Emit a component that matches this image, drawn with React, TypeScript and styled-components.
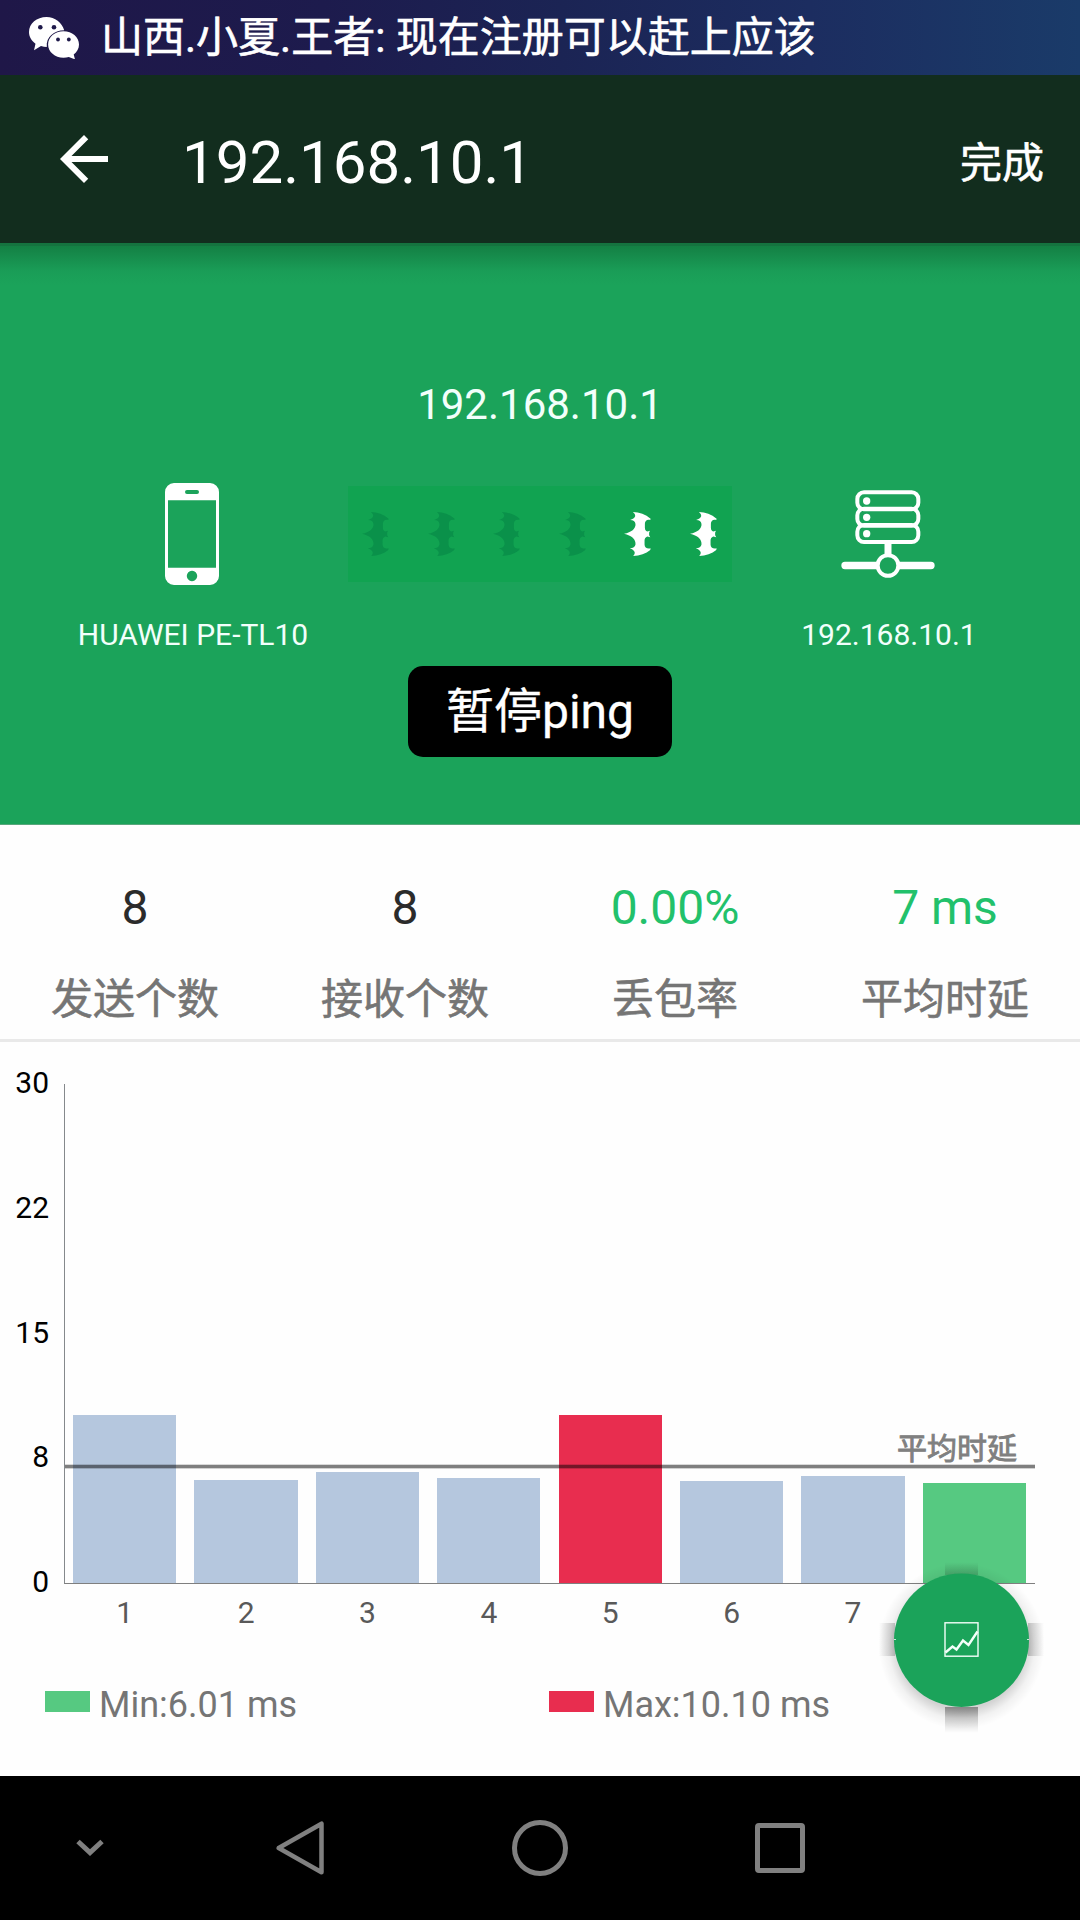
import React from "react";
import styled, { createGlobalStyle } from "styled-components";

const GlobalStyle = createGlobalStyle`
  *, *::before, *::after { box-sizing: border-box; }
  body { margin: 0; background: #fff; }
`;

const Screen = styled.div`
  position: relative;
  width: 1080px;
  height: 1920px;
  display: flex;
  flex-direction: column;
  overflow: hidden;
  background: #fefefe;
  font-family: Roboto, "Noto Sans CJK SC", sans-serif;
`;

const StatusBar = styled.div`
  height: 75px;
  flex: none;
  display: flex;
  align-items: center;
  padding-left: 29px;
  gap: 22px;
  color: #fff;
  background: linear-gradient(90deg, #1f1748 0%, #1d1b4d 30%, #1b2454 52%, #1c2d60 75%, #1a3b69 100%);
`;

const Ticker = styled.span`
  margin-top: -1px;
  font-size: 42px;
  line-height: 75px;
  white-space: pre;
  -webkit-text-stroke: 0.6px #fff;
`;

const AppBar = styled.header`
  height: 168px;
  flex: none;
  display: flex;
  align-items: center;
  padding: 0 36px 0 48px;
  background: #122d1e;
  color: #fff;
`;

const Title = styled.h1`
  margin: 0;
  padding: 7px 0 0 62px;
  flex: 1;
  font-size: 60px;
  line-height: 72px;
  font-weight: 400;
`;

const DoneButton = styled.button`
  border: 0;
  background: none;
  padding: 9px 0 0;
  color: #fff;
  font: 400 42px/50px Roboto, "Noto Sans CJK SC", sans-serif;
  -webkit-text-stroke: 0.6px #fff;
`;

const Hero = styled.section`
  height: 582px;
  flex: none;
  display: flex;
  flex-direction: column;
  align-items: center;
  padding-top: 137px;
  color: #fff;
  border-bottom: 1px solid #57a77c;
  background: linear-gradient(
      180deg,
      #15733f 0,
      #15733f 3px,
      #148044 3px,
      #178f4e 16px,
      #1a9d57 28px,
      rgba(27, 163, 90, 0) 42px
    ),
    #1ba35a;
`;

const HostName = styled.div`
  font-size: 42px;
  line-height: 50px;
  color: #f2fffb;
`;

const Route = styled.div`
  width: 1008px;
  height: 183px;
  margin-top: 53px;
  display: grid;
  grid-template-columns: 312px 384px 312px;
`;

const Endpoint = styled.div`
  display: flex;
  flex-direction: column;
  align-items: center;
`;

const IconSlot = styled.div`
  height: 102px;
  display: flex;
  align-items: center;
`;

const EndpointLabel = styled.span`
  margin-top: 32px;
  padding-left: 2px;
  font-size: 30px;
  line-height: 36px;
  color: #f2fffb;
`;

const Track = styled.div`
  height: 96px;
  margin-top: 3px;
  padding: 0 15px 0 14px;
  display: flex;
  align-items: center;
  justify-content: space-between;
  background: #11a351;
`;

const PauseButton = styled.button`
  width: 264px;
  height: 91px;
  padding: 1px 0 0;
  border: 0;
  border-radius: 15px;
  background: #000;
  color: #fff;
  font: 400 48px/90px Roboto, "Noto Sans CJK SC", sans-serif;
  -webkit-text-stroke: 0.3px #fff;
`;

const Stats = styled.section`
  height: 217px;
  flex: none;
  display: grid;
  grid-template-columns: repeat(4, 1fr);
  padding-top: 55px;
  border-bottom: 3px solid #e9e9e9;
`;

const Stat = styled.div`
  display: flex;
  flex-direction: column;
  align-items: center;
  gap: 40px;
`;

const StatValue = styled.span<{ $good?: boolean }>`
  font-size: 48px;
  line-height: 56px;
  color: ${(p) => (p.$good ? "#22c16b" : "#2b2b2b")};
`;

const StatLabel = styled.span`
  margin-top: -1px;
  font-size: 42px;
  line-height: 50px;
  color: #757575;
  -webkit-text-stroke: 0.6px #757575;
`;

const ChartPanel = styled.section`
  height: 734px;
  flex: none;
  display: grid;
  grid-template-columns: 49px 971px;
  grid-template-rows: 542px 54px auto;
  column-gap: 15px;
  padding-top: 26px;
`;

const YAxis = styled.div`
  height: 529px;
  display: flex;
  flex-direction: column;
  justify-content: space-between;
  text-align: right;
  font-size: 30px;
  line-height: 30px;
  color: #000;
`;

const Plot = styled.div`
  position: relative;
  height: 500px;
  margin-top: 16px;
  padding: 0 9px 0 8px;
  display: grid;
  grid-template-columns: repeat(8, 1fr);
  column-gap: 18.2px;
  align-items: end;
  border-left: 1px solid #85898c;
  border-bottom: 1px solid #7f7f7f;
`;

const Bar = styled.div<{ $color: string; $height: number }>`
  height: ${(p) => p.$height}px;
  background: ${(p) => p.$color};
`;

const AverageLine = styled.div`
  position: absolute;
  left: 0;
  right: 0;
  top: 380px;
  height: 5px;
  background: linear-gradient(
    180deg,
    rgba(0, 0, 0, 0.15) 0 1px,
    rgba(0, 0, 0, 0.5) 1px 4px,
    rgba(0, 0, 0, 0.18) 4px 5px
  );
`;

const AverageLabel = styled.span`
  position: absolute;
  right: 18px;
  top: 347px;
  font-size: 30px;
  line-height: 36px;
  color: #808080;
  -webkit-text-stroke: 0.9px #808080;
`;

const XAxis = styled.div`
  grid-column: 2;
  display: grid;
  grid-template-columns: repeat(8, 1fr);
  margin-top: -15px;
  text-align: center;
  font-size: 30px;
  line-height: 36px;
  color: #595959;
`;

const Legend = styled.div`
  grid-column: 1 / -1;
  display: grid;
  grid-template-columns: 504px auto;
  align-items: start;
  padding: 19px 0 0 45px;
`;

const LegendItem = styled.div`
  display: flex;
  align-items: flex-start;
  gap: 9px;
  padding-top: 1px;
  font-size: 36px;
  line-height: 42px;
  color: #757575;
`;

const Swatch = styled.i<{ $color: string }>`
  width: 45px;
  height: 21px;
  margin-top: 7px;
  background: ${(p) => p.$color};
`;

const Fab = styled.button`
  position: absolute;
  left: 879px;
  top: 1560px;
  width: 166px;
  height: 174px;
  padding: 0;
  border: 0;
  background: none;
`;

const NavBar = styled.nav`
  height: 144px;
  flex: none;
  display: grid;
  grid-template-columns: 180px 240px 240px 240px 180px;
  align-items: center;
  justify-items: center;
  background: #000;
`;

const WechatLogo = () => (
  <svg width="50" height="42" viewBox="0 0 50 42" fill="#fff">
    <path d="M17.500 0C7.800 0 0 6.600 0 15c0 4.700 2.500 8.900 6.500 11.700L5 33.200l7-4.200c1.900.6 3.800.9 5.800.9C17 20 25 13.400 35.200 13.300 33 5.500 26 0 17.500 0z" />
    <path d="M34.500 14.300c-8.600 0-15.400 5.900-15.400 13.200s6.800 13.200 15.400 13.200c1.900 0 3.700-.3 5.300-.8l6.200 2.500-1.300-4.900c3.300-2.400 5.300-6 5.300-10 0-7.300-6.900-13.200-15.500-13.200z" />
    <g fill="#1e194a">
      <circle cx="11.300" cy="10.300" r="2.300" />
      <circle cx="25" cy="10.300" r="2.300" />
      <circle cx="29" cy="22.500" r="1.900" />
      <circle cx="39.800" cy="22.500" r="1.900" />
    </g>
  </svg>
);

const BackArrow = () => (
  <svg width="72" height="72" viewBox="0 0 24 24" fill="#fff">
    <path d="M20 11H7.830l5.590-5.590L12 4l-8 8 8 8 1.410-1.410L7.830 13H20v-2z" />
  </svg>
);

const PhoneIcon = () => (
  <svg width="54" height="102" viewBox="0 0 54 102">
    <path
      fill="#fff"
      fillRule="evenodd"
      d="M9 0h36a9 9 0 0 1 9 9v84a9 9 0 0 1-9 9H9a9 9 0 0 1-9-9V9a9 9 0 0 1 9-9zM3 17.300v67.400h48V17.300zM22 7a2 2 0 0 0 0 4h10a2 2 0 0 0 0-4zM27 87.800a5.200 5.200 0 1 0 .01 0z"
    />
  </svg>
);

const ServerIcon = () => (
  <svg width="94" height="88" viewBox="0 0 282 264" fill="none" stroke="#fff" strokeWidth="12">
    <rect x="49" y="7" width="183" height="51" rx="20" />
    <rect x="49" y="56" width="183" height="51" rx="20" />
    <rect x="49" y="105" width="183" height="51" rx="20" />
    <g fill="#fff" stroke="none">
      <circle cx="77" cy="33" r="11" />
      <circle cx="77" cy="82" r="11" />
      <circle cx="77" cy="131" r="11" />
    </g>
    <path d="M141 160v34" strokeWidth="21" />
    <path d="M12 226.500H108M174 226.500H270" strokeWidth="22" strokeLinecap="round" />
    <circle cx="141" cy="226.500" r="31" fill="#1ba35a" />
  </svg>
);

const Bat = ({ active }: { active: boolean }) => (
  <svg width="27" height="44" viewBox="0 0 80 131" fill={active ? "#fff" : "#0a914a"}>
    <path d="M26 0C46 1 64 7 79 20L78 24C68 21 62 27 62 35V47C62 53 65 57 69 58L77 56L74 63Q77 65 74 68L78 75L69 73C64 75 61 79 61 85V97C61 106 69 111 79 108L78 113C65 124 47 130 27 131C32 126 34 119 29 115Q25 110 17 108C27 108 33 104 34 97C36 82 22 70 0 65C22 61 35 50 34 36C33 28 28 24 18 24C26 22 31 18 33 13C34 8 31 4 26 0Z" />
  </svg>
);

const ChartButtonArt = () => (
  <svg width="166" height="174" viewBox="0 0 166 174">
    <defs>
      <radialGradient id="halo" cx="82.500" cy="86" r="83" gradientUnits="userSpaceOnUse">
        <stop offset="0.76" stopColor="#000" stopOpacity="0.17" />
        <stop offset="0.88" stopColor="#000" stopOpacity="0.05" />
        <stop offset="1" stopColor="#000" stopOpacity="0" />
      </radialGradient>
      <linearGradient id="down" x2="0" y2="1">
        <stop stopColor="#000" stopOpacity="0.36" />
        <stop offset="0.4" stopColor="#000" stopOpacity="0.18" />
        <stop offset="1" stopColor="#000" stopOpacity="0" />
      </linearGradient>
      <linearGradient id="up" x2="0" y2="1">
        <stop stopColor="#000" stopOpacity="0" />
        <stop offset="1" stopColor="#000" stopOpacity="0.16" />
      </linearGradient>
      <linearGradient id="left">
        <stop stopColor="#000" stopOpacity="0" />
        <stop offset="1" stopColor="#000" stopOpacity="0.2" />
      </linearGradient>
      <linearGradient id="right">
        <stop stopColor="#000" stopOpacity="0.2" />
        <stop offset="1" stopColor="#000" stopOpacity="0" />
      </linearGradient>
    </defs>
    <circle cx="82.500" cy="86" r="83" fill="url(#halo)" />
    <rect x="66" y="2" width="33" height="13" fill="url(#up)" />
    <rect x="66" y="147" width="33" height="26" fill="url(#down)" />
    <rect x="0" y="63" width="16" height="33" fill="url(#left)" />
    <rect x="149" y="63" width="16" height="33" fill="url(#right)" />
    <ellipse cx="82.500" cy="80.200" rx="67.500" ry="66.700" fill="#1ba35a" />
    <path d="M15 79.500h2M148 79.500h2" stroke="#c8eed9" strokeWidth="1" />
    <g fill="none" stroke="#f4fffa">
      <rect x="66" y="62.800" width="33" height="33.400" strokeWidth="1.400" />
      <path d="M66.500 92.500L73.500 86.500L77.500 89.500L84 80.500L89.500 85L98.500 71.500" strokeWidth="2.400" />
    </g>
  </svg>
);

const BLUE = "#b5c7de";
const RED = "#e82d4f";
const GREEN = "#56c981";

const bars = [
  { height: 168, color: BLUE },
  { height: 103, color: BLUE },
  { height: 111, color: BLUE },
  { height: 105, color: BLUE },
  { height: 168, color: RED },
  { height: 102, color: BLUE },
  { height: 107, color: BLUE },
  { height: 100, color: GREEN },
];

const stats = [
  { value: "8", label: "发送个数" },
  { value: "8", label: "接收个数" },
  { value: "0.00%", label: "丢包率", good: true },
  { value: "7 ms", label: "平均时延", good: true },
];

export default function App() {
  return (
    <>
      <GlobalStyle />
      <Screen>
        <StatusBar>
          <WechatLogo />
          <Ticker>山西.小夏.王者: 现在注册可以赶上应该</Ticker>
        </StatusBar>
        <AppBar>
          <BackArrow />
          <Title>192.168.10.1</Title>
          <DoneButton>完成</DoneButton>
        </AppBar>
        <Hero>
          <HostName>192.168.10.1</HostName>
          <Route>
            <Endpoint>
              <IconSlot>
                <PhoneIcon />
              </IconSlot>
              <EndpointLabel>HUAWEI PE-TL10</EndpointLabel>
            </Endpoint>
            <Track>
              {[0, 1, 2, 3, 4, 5].map((i) => (
                <Bat key={i} active={i > 3} />
              ))}
            </Track>
            <Endpoint>
              <IconSlot>
                <ServerIcon />
              </IconSlot>
              <EndpointLabel>192.168.10.1</EndpointLabel>
            </Endpoint>
          </Route>
          <PauseButton>暂停ping</PauseButton>
        </Hero>
        <Stats>
          {stats.map((s) => (
            <Stat key={s.label}>
              <StatValue $good={s.good}>{s.value}</StatValue>
              <StatLabel>{s.label}</StatLabel>
            </Stat>
          ))}
        </Stats>
        <ChartPanel>
          <YAxis>
            {[30, 22, 15, 8, 0].map((v) => (
              <span key={v}>{v}</span>
            ))}
          </YAxis>
          <Plot>
            {bars.map((b, i) => (
              <Bar key={i} $height={b.height} $color={b.color} />
            ))}
            <AverageLine />
            <AverageLabel>平均时延</AverageLabel>
          </Plot>
          <XAxis>
            {[1, 2, 3, 4, 5, 6, 7].map((n) => (
              <span key={n}>{n}</span>
            ))}
          </XAxis>
          <Legend>
            <LegendItem>
              <Swatch $color={GREEN} />
              <span>Min:6.01 ms</span>
            </LegendItem>
            <LegendItem>
              <Swatch $color={RED} />
              <span>Max:10.10 ms</span>
            </LegendItem>
          </Legend>
        </ChartPanel>
        <NavBar>
          <svg width="28" height="18" viewBox="0 0 28 18" fill="none" stroke="#808080" strokeWidth="5">
            <path d="M2 2.500L14 13.500L26 2.500" />
          </svg>
          <svg width="48" height="54" viewBox="0 0 48 54" fill="none" stroke="#808080" strokeWidth="4.500" strokeLinejoin="round">
            <path d="M45.500 2.700V51.300L2.700 27Z" />
          </svg>
          <svg width="56" height="56" viewBox="0 0 56 56" fill="none" stroke="#808080" strokeWidth="5">
            <circle cx="28" cy="28" r="25.500" />
          </svg>
          <svg width="50" height="50" viewBox="0 0 50 50" fill="none" stroke="#808080" strokeWidth="5">
            <rect x="2.500" y="2.500" width="45" height="45" rx="1.500" />
          </svg>
        </NavBar>
        <Fab aria-label="chart">
          <ChartButtonArt />
        </Fab>
      </Screen>
    </>
  );
}
